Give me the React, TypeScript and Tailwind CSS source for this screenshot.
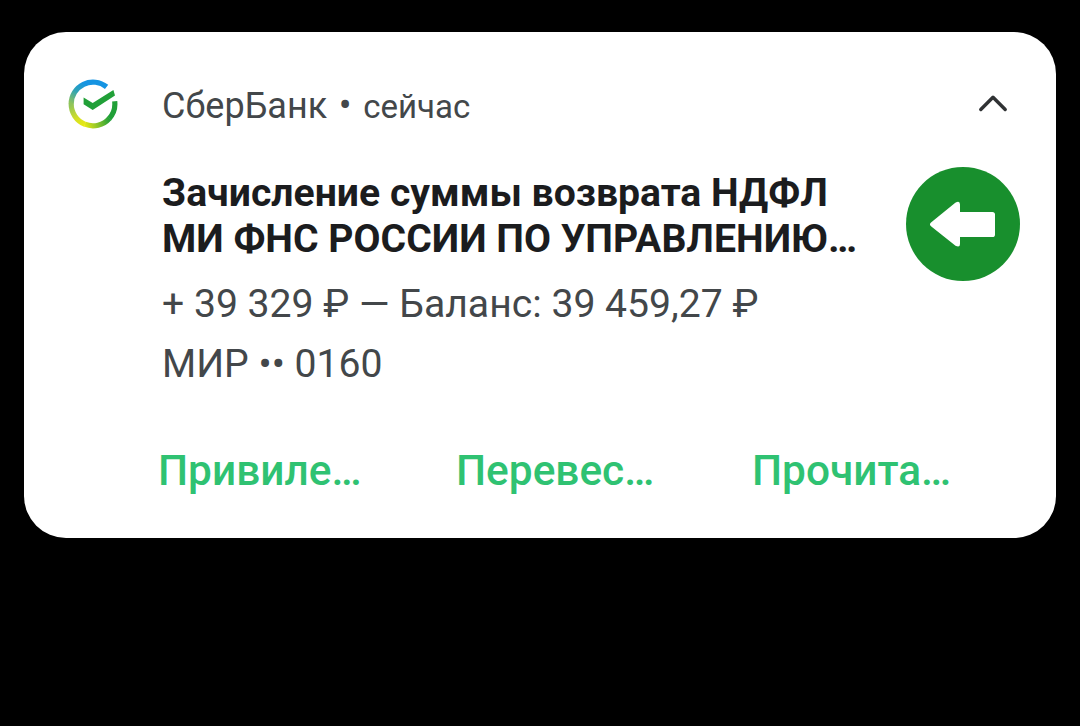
import React from 'react';

interface NotificationAction {
  id: string;
  label: string;
  className: string;
}

const actions: NotificationAction[] = [
  { id: 'privileges', label: 'Привиле…', className: 'w-[298px]' },
  { id: 'transfer', label: 'Перевес…', className: 'w-[296px]' },
  { id: 'read', label: 'Прочита…', className: 'w-[200px]' },
];

const BankLogo: React.FC = () => (
  <svg className="block w-[50px] h-[50px]" viewBox="0 0 50 50" fill="none">
    <defs>
      <linearGradient id="logo-top" x1="4" y1="25" x2="16" y2="4" gradientUnits="userSpaceOnUse">
        <stop stopColor="#8fc45a" />
        <stop offset="0.55" stopColor="#2fa3b4" />
        <stop offset="1" stopColor="#1594e2" />
      </linearGradient>
      <linearGradient id="logo-left" x1="4" y1="25" x2="16" y2="47" gradientUnits="userSpaceOnUse">
        <stop stopColor="#8fc45a" />
        <stop offset="0.6" stopColor="#d3df26" />
        <stop offset="1" stopColor="#e9ea12" />
      </linearGradient>
      <linearGradient id="logo-bottom" x1="16" y1="46" x2="41" y2="38" gradientUnits="userSpaceOnUse">
        <stop stopColor="#e9ea12" />
        <stop offset="0.5" stopColor="#8ac32b" />
        <stop offset="1" stopColor="#21a038" />
      </linearGradient>
    </defs>
    <path d="M3.2 25A21.8 21.8 0 0 1 38.6 7.9" stroke="url(#logo-top)" strokeWidth="5.2" />
    <path d="M3.2 24.8A21.8 21.8 0 0 0 17 45.3" stroke="url(#logo-left)" strokeWidth="5.2" />
    <path d="M16.8 45.2A21.8 21.8 0 0 0 41.5 39.2" stroke="url(#logo-bottom)" strokeWidth="5.2" />
    <path d="M41.3 39.4A21.8 21.8 0 0 0 46.7 22.3" stroke="#21a038" strokeWidth="5.2" />
    <path d="M15.6 18.4L24.7 24L45.4 11L47 16.4L24.7 31L15.6 25.3Z" fill="#21a038" />
  </svg>
);

const IncomingIcon: React.FC = () => (
  <div className="w-[114px] h-[114px] rounded-full bg-[#188f2d]">
    <svg className="block w-full h-full" viewBox="0 0 114 114" fill="none">
      <path
        d="M25 55.4L49.3 35.8Q54 33.3 54 37.5V45H86.4Q89 45 89 47.6V67.4Q89 70 86.4 70H54V77Q54 81 49.5 78.8L25 59.2Q22.8 57.3 25 55.4Z"
        fill="#fff"
      />
    </svg>
  </div>
);

export default function App() {
  return (
    <div className="min-h-screen bg-black pt-8 px-6 font-['Roboto',sans-serif]">
      <div className="h-[506px] rounded-[42px] bg-white pt-[47px] pl-11 pr-9">
        <div className="flex h-[54px] items-start">
          <BankLogo />
          <div className="flex items-baseline pt-[2px] ml-[44px] text-[#43474a] leading-[48px] whitespace-nowrap">
            <span className="text-[36px]">СберБанк</span>
            <span className="w-[36px] text-center text-[38px]">•</span>
            <span className="text-[33px]">сейчас</span>
          </div>
          <svg className="ml-auto mr-3 mt-[14px] w-[30px] h-5" viewBox="0 0 30 20" fill="none">
            <path
              d="M2.8 16.5L15 4.2L27.2 16.5"
              stroke="#303234"
              strokeWidth="3.4"
              strokeLinecap="round"
              strokeLinejoin="round"
            />
          </svg>
        </div>

        <div className="flex items-start justify-between pl-[94px] pt-[34px]">
          <div className="pt-[3px] whitespace-nowrap">
            <h3 className="text-[39.15px] leading-[46px] font-bold text-[#1b1c1e]">
              Зачисление суммы возврата НДФЛ
              <br />
              МИ ФНС РОССИИ ПО УПРАВЛЕНИЮ…
            </h3>
            <div className="pt-3 text-[39.15px] leading-[60px] text-[#43474a]">
              <p>+ 39 329 ₽ — Баланс: 39 459,27 ₽</p>
              <p>МИР •• 0160</p>
            </div>
          </div>
          <IncomingIcon />
        </div>

        <div className="flex pl-[90px] pt-[52px]">
          {actions.map((action) => (
            <button
              key={action.id}
              className={`${action.className} text-left text-[42.4px] leading-[50px] font-medium text-[#2fc272] whitespace-nowrap`}
            >
              {action.label}
            </button>
          ))}
        </div>
      </div>
    </div>
  );
}
